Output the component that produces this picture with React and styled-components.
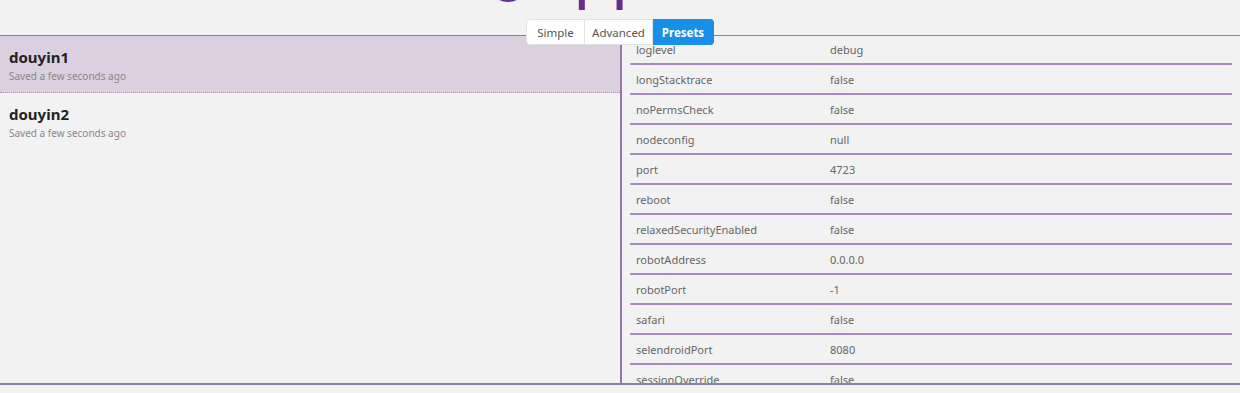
import React from 'react';
import styled, { createGlobalStyle } from 'styled-components';

const GlobalStyle = createGlobalStyle`
  html, body {
    margin: 0;
    padding: 0;
    background: #f2f2f2;
    font-family: 'Noto Sans', 'Open Sans', 'Liberation Sans', sans-serif;
    overflow: hidden;
  }
`;

const Page = styled.div`
  position: relative;
  width: 1240px;
  height: 393px;
  overflow: hidden;
`;

const Header = styled.div`
  height: 35px;
  overflow: hidden;
  display: flex;
  justify-content: center;
  padding-left: 8px;
`;

const Logo = styled.div`
  display: flex;
  align-items: flex-end;
  gap: 8px;
  margin-top: -70px;
  height: 76px;
`;

const LogoText = styled.span`
  font-family: 'Liberation Sans', Arial, sans-serif;
  font-size: 68px;
  line-height: 1;
  color: #662d91;
`;

const Tabs = styled.div`
  position: absolute;
  top: 19px;
  left: 526px;
  display: flex;
  height: 26px;
  z-index: 2;
`;

const Tab = styled.div`
  display: flex;
  align-items: center;
  justify-content: center;
  width: ${(p) => p.w}px;
  box-sizing: border-box;
  font-size: 11.5px;
  font-weight: ${(p) => (p.active ? 700 : 400)};
  color: ${(p) => (p.active ? '#fff' : '#555')};
  background: ${(p) => (p.active ? '#1890e8' : '#fff')};
  border: 1px solid ${(p) => (p.active ? '#1890e8' : '#e2e2e2')};
  border-left-width: ${(p) => (p.first ? 1 : 0)}px;
  border-radius: ${(p) => (p.first ? '4px 0 0 4px' : p.last ? '0 4px 4px 0' : '0')};
`;

const Main = styled.div`
  display: flex;
  height: 347px;
  border-top: 1px solid #9a74b2;
  border-bottom: 2px solid #8c80a8;
`;

const Sessions = styled.div`
  width: 620px;
  border-right: 2px solid #9a74b2;
  display: flex;
  flex-direction: column;
`;

const Session = styled.div`
  height: 57px;
  box-sizing: border-box;
  padding: 11px 9px 0;
  background: ${(p) => (p.selected ? '#dbd0e0' : 'transparent')};
  border-bottom: 1px dotted ${(p) => (p.selected ? '#a98bc4' : 'transparent')};
`;

const SessionName = styled.div`
  font-size: 15px;
  font-weight: 700;
  color: #222;
  line-height: 20px;
`;

const SessionMeta = styled.div`
  font-size: 10px;
  color: #888;
  line-height: 16px;
  margin-top: 1px;
`;

const Caps = styled.div`
  flex: 1;
  padding: 0 8px;
  overflow: hidden;
`;

const CapList = styled.div`
  margin-top: -1px;
`;

const CapRow = styled.div`
  display: grid;
  grid-template-columns: 194px 1fr;
  height: 30px;
  box-sizing: border-box;
  align-items: center;
  padding: 0 6px 0;
  border-bottom: 2px solid #a88ac0;
  font-size: 11px;
  color: #666;
`;

const caps = [
  ['loglevel', 'debug'],
  ['longStacktrace', 'false'],
  ['noPermsCheck', 'false'],
  ['nodeconfig', 'null'],
  ['port', '4723'],
  ['reboot', 'false'],
  ['relaxedSecurityEnabled', 'false'],
  ['robotAddress', '0.0.0.0'],
  ['robotPort', '-1'],
  ['safari', 'false'],
  ['selendroidPort', '8080'],
  ['sessionOverride', 'false'],
  ['showConfig', 'false'],
];

const sessions = [
  { name: 'douyin1', selected: true },
  { name: 'douyin2' },
];

export default function App() {
  return (
    <Page>
      <GlobalStyle />
      <Header>
        <Logo>
          <svg width="40" height="44" viewBox="0 0 40 44">
            <circle cx="20" cy="20" r="17" fill="none" stroke="#662d91" strokeWidth="6" />
          </svg>
          <LogoText>appium</LogoText>
        </Logo>
      </Header>
      <Tabs>
        <Tab w={59} first>Simple</Tab>
        <Tab w={68}>Advanced</Tab>
        <Tab w={61} active last>Presets</Tab>
      </Tabs>
      <Main>
        <Sessions>
          {sessions.map((s) => (
            <Session key={s.name} selected={s.selected}>
              <SessionName>{s.name}</SessionName>
              <SessionMeta>Saved a few seconds ago</SessionMeta>
            </Session>
          ))}
        </Sessions>
        <Caps>
          <CapList>
            {caps.map(([k, v]) => (
              <CapRow key={k}>
                <span>{k}</span>
                <span>{v}</span>
              </CapRow>
            ))}
          </CapList>
        </Caps>
      </Main>
    </Page>
  );
}
